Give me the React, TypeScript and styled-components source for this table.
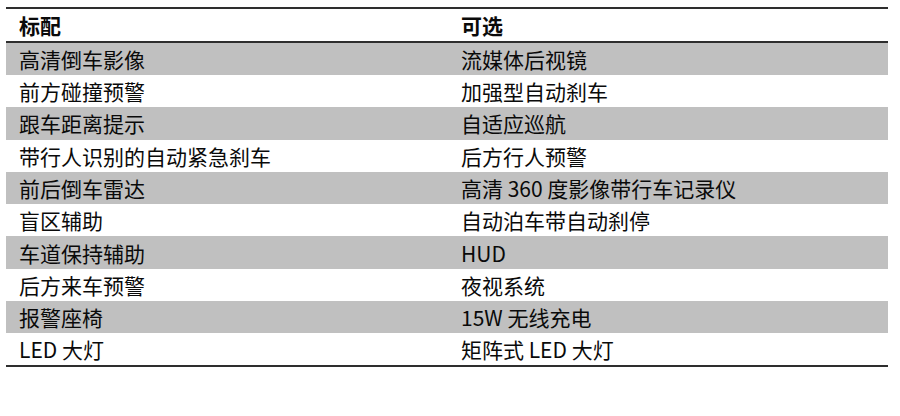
import React from "react";
import styled, { createGlobalStyle } from "styled-components";

const Global = createGlobalStyle`
  html, body { margin: 0; padding: 0; background: #ffffff; }
  body { font-family: "Noto Sans CJK SC", "Noto Sans", sans-serif; }
`;

const Page = styled.div`
  padding: 7px 12px 0 6px;
  width: 900px;
  height: 416px;
  box-sizing: border-box;
  background: #fff;
`;

const Table = styled.table`
  width: 882px;
  border-collapse: collapse;
  table-layout: fixed;
  border-top: 2px solid #2e2e2e;
  border-bottom: 2px solid #2e2e2e;
  color: #0a0a0a;
  font-size: 21px;
`;

const Col = styled.col<{ $w: number }>`
  width: ${(p) => p.$w}px;
`;

const HeadCell = styled.th`
  box-sizing: border-box;
  height: 32px;
  padding: 0 0 0 13px;
  text-align: left;
  font-weight: 700;
  line-height: 32px;
  border-bottom: 2px solid #2e2e2e;
`;

const Row = styled.tr<{ $shaded: boolean }>`
  background: ${(p) => (p.$shaded ? "#c0c0c0" : "#ffffff")};
`;

const Cell = styled.td`
  box-sizing: border-box;
  height: 32.3px;
  padding: 0 0 0 13px;
  line-height: 32px;
  font-weight: 400;
  white-space: nowrap;
`;

const rows: [string, string][] = [
  ["高清倒车影像", "流媒体后视镜"],
  ["前方碰撞预警", "加强型自动刹车"],
  ["跟车距离提示", "自适应巡航"],
  ["带行人识别的自动紧急刹车", "后方行人预警"],
  ["前后倒车雷达", "高清 360 度影像带行车记录仪"],
  ["盲区辅助", "自动泊车带自动刹停"],
  ["车道保持辅助", "HUD"],
  ["后方来车预警", "夜视系统"],
  ["报警座椅", "15W 无线充电"],
  ["LED 大灯", "矩阵式 LED 大灯"],
];

export default function App() {
  return (
    <Page>
      <Global />
      <Table>
        <colgroup>
          <Col $w={442} />
          <Col $w={440} />
        </colgroup>
        <thead>
          <tr>
            <HeadCell>标配</HeadCell>
            <HeadCell>可选</HeadCell>
          </tr>
        </thead>
        <tbody>
          {rows.map(([a, b], i) => (
            <Row key={i} $shaded={i % 2 === 0}>
              <Cell>{a}</Cell>
              <Cell>{b}</Cell>
            </Row>
          ))}
        </tbody>
      </Table>
    </Page>
  );
}
